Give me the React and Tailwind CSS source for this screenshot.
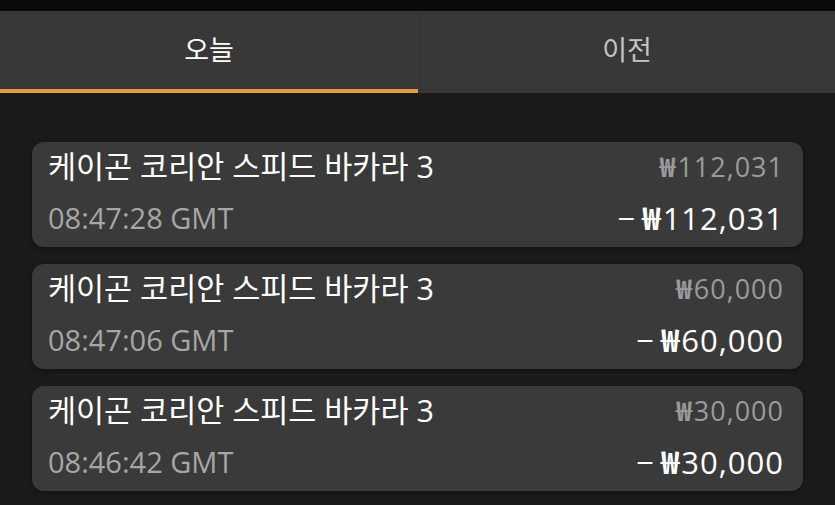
function Won() {
  return <span className="font-bold mr-[1px]" style={{ fontFamily: '"Noto Sans CJK KR", sans-serif' }}>₩</span>;
}

export default function App() {
  const items = [
    { time: "08:47:28 GMT", amt: "112,031" },
    { time: "08:47:06 GMT", amt: "60,000" },
    { time: "08:46:42 GMT", amt: "30,000" },
  ];
  return (
    <div className="w-[835px] h-[505px] overflow-hidden bg-[#1b1b1b] flex flex-col" style={{ fontFamily: '"Open Sans", "Noto Sans CJK KR", sans-serif' }}>
      <div className="h-[11px] bg-[#0a0a0a]" />
      <div className="h-[82px] bg-[#383838] flex">
        <div className="w-[418px] flex flex-col">
          <div className="flex-1 flex items-center justify-center text-white text-[27px] leading-none pb-[2px]">오늘</div>
          <div className="h-[4px] bg-[#e89a45]" />
        </div>
        <div className="w-px bg-[#333333]" />
        <div className="flex-1 flex items-center justify-center text-[#c4c4c4] text-[27px] leading-none pb-[6px]">이전</div>
      </div>
      <div className="flex flex-col gap-[17px] px-[32px] pt-[49px] w-[835px]">
        {items.map((it, i) => (
          <div key={i} className="h-[105px] bg-[#3a3a3a] rounded-[12px] pl-[16px] pr-[19px] flex flex-col shadow-[0_2px_6px_rgba(0,0,0,0.4)]">
            <div className="flex justify-between items-center h-[48px]">
              <span className="text-white text-[30.5px] leading-none">케이곤 코리안 스피드 바카라 3</span>
              <span className="text-[#9a9a9a] text-[27px] leading-none tracking-[1px]"><Won />{it.amt}</span>
            </div>
            <div className="flex justify-between items-center h-[54px]">
              <span className="text-[#a6a6a6] text-[29px] leading-none">{it.time}</span>
              <span className="text-white text-[31px] leading-none tracking-[1px]"><span className="mr-[6px]">−</span><Won />{it.amt}</span>
            </div>
          </div>
        ))}
      </div>
    </div>
  );
}
